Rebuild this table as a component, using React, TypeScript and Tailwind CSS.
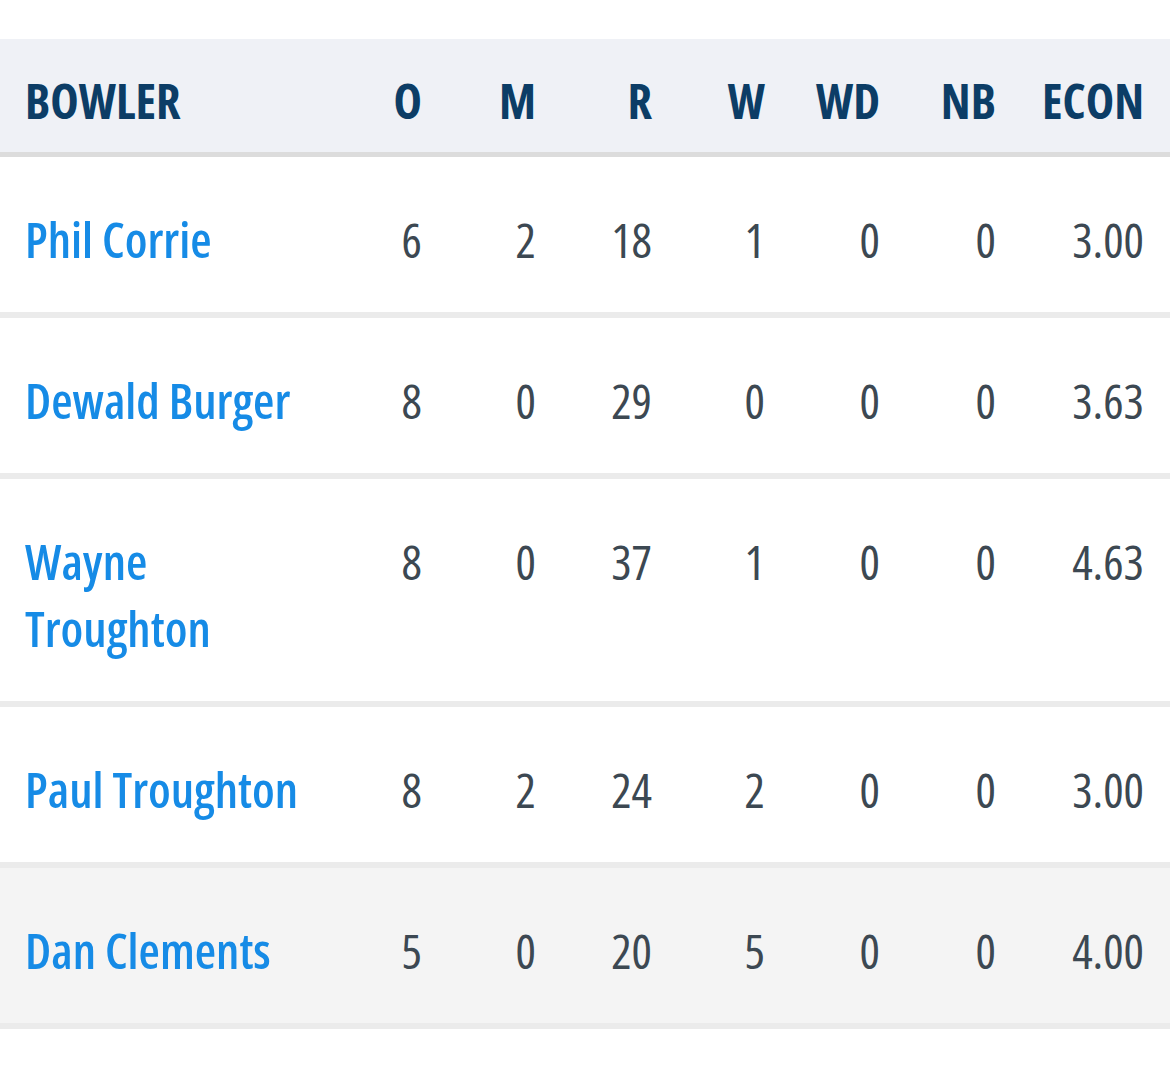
import React from "react";

type Row = {
  name: string;
  o: string;
  m: string;
  r: string;
  w: string;
  wd: string;
  nb: string;
  econ: string;
  shaded?: boolean;
};

const rows: Row[] = [
  { name: "Phil Corrie", o: "6", m: "2", r: "18", w: "1", wd: "0", nb: "0", econ: "3.00" },
  { name: "Dewald Burger", o: "8", m: "0", r: "29", w: "0", wd: "0", nb: "0", econ: "3.63" },
  { name: "Wayne Troughton", o: "8", m: "0", r: "37", w: "1", wd: "0", nb: "0", econ: "4.63" },
  { name: "Paul Troughton", o: "8", m: "2", r: "24", w: "2", wd: "0", nb: "0", econ: "3.00" },
  { name: "Dan Clements", o: "5", m: "0", r: "20", w: "5", wd: "0", nb: "0", econ: "4.00", shaded: true },
];

// column edges measured off the scorecard: name, O, M, R, W, WD, NB, ECON
const cols = "grid grid-cols-[282px_115px_114px_116px_113px_115px_116px_148px] pl-[25px] pr-[26px]";

export default function App() {
  return (
    <div className="w-[1170px] h-[1080px] bg-white pt-[39px] font-['Open_Sans',sans-serif] font-stretch-[75%]">
      <div className={`${cols} h-[118px] items-center bg-[#eff1f6] pt-[10px] text-[48px] font-bold text-[#0c3d66] border-b-[5px] border-[#dcdcdc]`}>
        <div>BOWLER</div>
        <div className="text-right">O</div>
        <div className="text-right">M</div>
        <div className="text-right">R</div>
        <div className="text-right">W</div>
        <div className="text-right">WD</div>
        <div className="text-right">NB</div>
        <div className="text-right">ECON</div>
      </div>

      {rows.map((row) => (
        <div
          key={row.name}
          className={`${cols} pt-[49px] pb-[39px] text-[48px] leading-[67px] border-b-[6px] border-[#ebebeb] ${
            row.shaded ? "bg-[#f4f4f4]" : "bg-white"
          }`}
        >
          <div className="text-[49px] font-semibold text-[#168be6]">{row.name}</div>
          <div className="text-right text-[#3c4852]">{row.o}</div>
          <div className="text-right text-[#3c4852]">{row.m}</div>
          <div className="text-right text-[#3c4852]">{row.r}</div>
          <div className="text-right text-[#3c4852]">{row.w}</div>
          <div className="text-right text-[#3c4852]">{row.wd}</div>
          <div className="text-right text-[#3c4852]">{row.nb}</div>
          <div className="text-right text-[#3c4852]">{row.econ}</div>
        </div>
      ))}
    </div>
  );
}
